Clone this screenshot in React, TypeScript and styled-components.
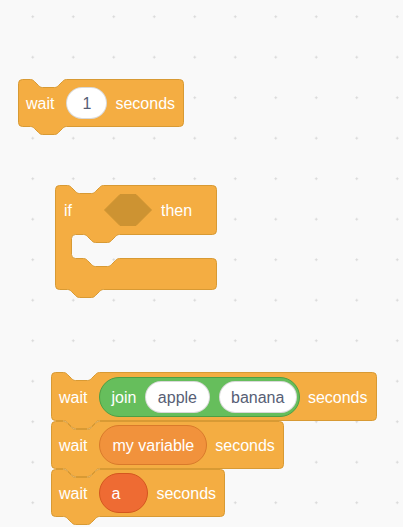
import React, { useLayoutEffect, useRef, useState } from 'react';
import styled, { createGlobalStyle } from 'styled-components';

const colors = {
  canvas: '#f9f9f9',
  dot: '#d6d6d6',
  control: '#f4ad42',
  controlEdge: '#d89a34',
  slot: '#cd9332',
  operator: '#66be5c',
  operatorEdge: '#4d9f45',
  variable: '#f1923c',
  variableEdge: '#d97a2b',
  list: '#ee6b33',
  listEdge: '#d4561f',
  inputText: '#575e75',
};

const GlobalStyle = createGlobalStyle`
  html, body {
    margin: 0;
    padding: 0;
    background: ${colors.canvas};
    font-family: "Liberation Sans", Arial, sans-serif;
  }
`;

// scratch notch geometry: 36px wide, 8px deep
const NOTCH = 'c 2,0 3,1 4,2 l 4,4 c 1,1 2,2 4,2 h 12 c 2,0 3,-1 4,-2 l 4,-4 c 1,-1 2,-2 4,-2';
const TAB = 'c -2,0 -3,1 -4,2 l -4,4 c -1,1 -2,2 -4,2 h -12 c -2,0 -3,-1 -4,-2 l -4,-4 c -1,-1 -2,-2 -4,-2';

const statementPath = (w: number, h: number) =>
  `M0,4 a4,4 0 0 1 4,-4 H12 ${NOTCH} H${w - 4} a4,4 0 0 1 4,4 V${h - 4} a4,4 0 0 1 -4,4 H48 ${TAB} H4 a4,4 0 0 1 -4,-4 Z`;

const cPath = (w: number, arm: number, mouth: number, bottom: number) => {
  const inner = 16;
  const total = arm + mouth + bottom;
  return [
    `M0,4 a4,4 0 0 1 4,-4 H12 ${NOTCH} H${w - 4} a4,4 0 0 1 4,4`,
    `V${arm - 4} a4,4 0 0 1 -4,4 H${inner + 48} ${TAB} H${inner + 4} a4,4 0 0 0 -4,4`,
    `V${arm + mouth - 4} a4,4 0 0 0 4,4 H${inner + 12} ${NOTCH} H${w - 4} a4,4 0 0 1 4,4`,
    `V${total - 4} a4,4 0 0 1 -4,4 H48 ${TAB} H4 a4,4 0 0 1 -4,-4 Z`,
  ].join(' ');
};

const useWidth = () => {
  const ref = useRef<HTMLDivElement>(null);
  const [width, setWidth] = useState(0);
  useLayoutEffect(() => {
    const el = ref.current;
    if (!el) return;
    const update = () => setWidth(el.offsetWidth);
    update();
    const ro = new ResizeObserver(update);
    ro.observe(el);
    return () => ro.disconnect();
  }, []);
  return [ref, width] as const;
};

const Canvas = styled.div`
  position: relative;
  width: 100%;
  height: 100vh;
  overflow: hidden;
  background-color: ${colors.canvas};
  background-image: radial-gradient(circle, ${colors.dot} 0.9px, transparent 1.3px);
  background-size: 40.5px 40.5px;
  background-position: 12.5px -3.55px;
`;

const Stack = styled.div<{ $x: number; $y: number }>`
  position: absolute;
  left: ${(p) => p.$x}px;
  top: ${(p) => p.$y}px;
  display: flex;
  flex-direction: column;
  align-items: flex-start;
`;

const Outline = styled.svg`
  position: absolute;
  left: 0;
  top: 0;
  overflow: visible;
  pointer-events: none;
`;

const BlockBox = styled.div<{ $h: number }>`
  position: relative;
  box-sizing: border-box;
  height: ${(p) => p.$h}px;
  padding: 0 9px 0 8px;
  display: flex;
  align-items: center;
`;

const Row = styled.div<{ $gap?: number }>`
  position: relative;
  display: flex;
  align-items: center;
  gap: ${(p) => p.$gap ?? 8}px;
`;

const Label = styled.span<{ $after?: number }>`
  color: #fff;
  font-size: 16px;
  line-height: 1;
  padding-top: 2px;
  white-space: nowrap;
  margin-right: ${(p) => p.$after ?? 0}px;
`;

const TextSlot = styled.div`
  box-sizing: border-box;
  height: 32px;
  min-width: 41px;
  padding: 2px 11.5px 0;
  border-radius: 16px;
  background: #fff;
  border: 1px solid rgba(0, 0, 0, 0.15);
  color: ${colors.inputText};
  font-size: 16px;
  display: flex;
  align-items: center;
  justify-content: center;
  white-space: nowrap;
`;

const Reporter = styled.div<{ $fill: string; $edge: string; $pad?: number; $right?: number; $minW?: number }>`
  box-sizing: border-box;
  height: 40px;
  min-width: ${(p) => p.$minW ?? 40}px;
  padding: 0 ${(p) => p.$right ?? p.$pad ?? 11}px 0 ${(p) => p.$pad ?? 11}px;
  border-radius: 20px;
  background: ${(p) => p.$fill};
  border: 1px solid ${(p) => p.$edge};
  display: flex;
  align-items: center;
  gap: 9px;
`;

const CBox = styled.div`
  position: relative;
  display: flex;
  flex-direction: column;
  align-items: stretch;
`;

const Arm = styled.div`
  position: relative;
  height: 49px;
  box-sizing: border-box;
  padding: 0 25px 0 9px;
  display: flex;
  align-items: center;
`;

const Mouth = styled.div`
  height: 24px;
`;

const BottomArm = styled.div`
  height: 31px;
`;

const HexSlot = () => (
  <svg width="48" height="32" viewBox="0 0 48 32" style={{ display: 'block', marginRight: 9 }}>
    <path d="M0.5,16 L16,0.5 H32 L47.5,16 L32,31.5 H16 Z" fill={colors.slot} stroke={colors.slot} />
  </svg>
);

type BlockProps = { h?: number; gap?: number; children: React.ReactNode };

const Block = ({ h = 48, gap, children }: BlockProps) => {
  const [ref, w] = useWidth();
  return (
    <BlockBox ref={ref} $h={h}>
      {w > 0 && (
        <Outline width={w} height={h + 10}>
          <path
            transform="translate(0.5 0.5)"
            d={statementPath(w - 1, h - 1)}
            fill={colors.control}
            stroke={colors.controlEdge}
          />
        </Outline>
      )}
      <Row $gap={gap}>{children}</Row>
    </BlockBox>
  );
};

const IfBlock = () => {
  const [ref, w] = useWidth();
  return (
    <CBox ref={ref}>
      {w > 0 && (
        <Outline width={w} height={114}>
          <path
            transform="translate(0.5 0.5)"
            d={cPath(w - 1, 49, 24, 31)}
            fill={colors.control}
            stroke={colors.controlEdge}
          />
        </Outline>
      )}
      <Arm>
        <Label $after={32}>if</Label>
        <HexSlot />
        <Label>then</Label>
      </Arm>
      <Mouth />
      <BottomArm />
    </CBox>
  );
};

export default function App() {
  return (
    <>
      <GlobalStyle />
      <Canvas>
        <Stack $x={18} $y={79}>
          <Block>
            <Label $after={4}>wait</Label>
            <TextSlot>1</TextSlot>
            <Label>seconds</Label>
          </Block>
        </Stack>

        <Stack $x={55} $y={185}>
          <IfBlock />
        </Stack>

        <Stack $x={51} $y={372}>
          <Block h={49}>
            <Label $after={4}>wait</Label>
            <Reporter $fill={colors.operator} $edge={colors.operatorEdge} $right={2}>
              <Label>join</Label>
              <TextSlot>apple</TextSlot>
              <TextSlot>banana</TextSlot>
            </Reporter>
            <Label>seconds</Label>
          </Block>
          <Block>
            <Label $after={4}>wait</Label>
            <Reporter $fill={colors.variable} $edge={colors.variableEdge} $pad={12}>
              <Label>my variable</Label>
            </Reporter>
            <Label>seconds</Label>
          </Block>
          <Block>
            <Label $after={4}>wait</Label>
            <Reporter $fill={colors.list} $edge={colors.listEdge} $minW={49}>
              <Label>a</Label>
            </Reporter>
            <Label>seconds</Label>
          </Block>
        </Stack>
      </Canvas>
    </>
  );
}
